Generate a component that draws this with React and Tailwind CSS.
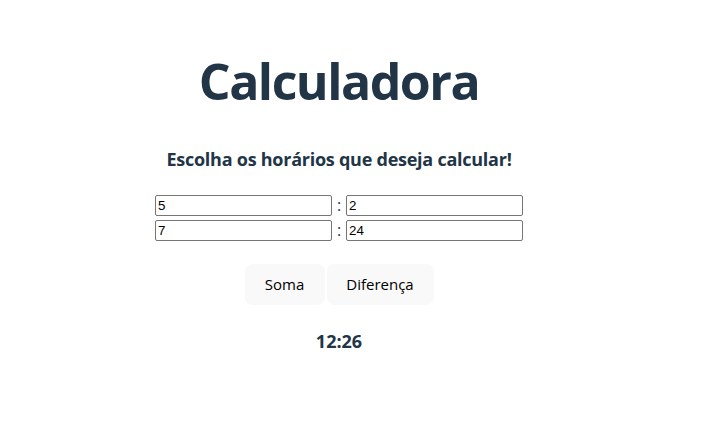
import { useState } from "react";

const font = { fontFamily: '"Open Sans", "Noto Sans", sans-serif' };
const inputFont = { fontFamily: '"Liberation Sans", Arial, sans-serif' };

export default function App() {
  const [h1, setH1] = useState("5");
  const [m1, setM1] = useState("2");
  const [h2, setH2] = useState("7");
  const [m2, setM2] = useState("24");

  return (
    <div className="min-h-screen w-full bg-white" style={font}>
      <div className="w-[678px] flex flex-col items-center text-[#213547]">
        <h1 className="mt-[54px] text-[50px] leading-[1.1] font-bold tracking-[-1.5px]">Calculadora</h1>

        <h3 className="mt-[38px] text-[18px] leading-[24px] font-bold tracking-[-0.25px]">
          Escolha os horários que deseja calcular!
        </h3>

        <div className="mt-[24px] flex flex-col gap-[4px]">
          <div className="flex items-center">
            <input
              className="w-[177px] h-[21px] border border-[#767676] rounded-[2px] px-[2px] text-[13.33px] text-black outline-none"
              style={inputFont}
              value={h1}
              onChange={(e) => setH1(e.target.value)}
            />
            <span className="w-[14px] text-center text-[16px] leading-[21px] text-[#213547]">:</span>
            <input
              className="w-[177px] h-[21px] border border-[#767676] rounded-[2px] px-[2px] text-[13.33px] text-black outline-none"
              style={inputFont}
              value={m1}
              onChange={(e) => setM1(e.target.value)}
            />
          </div>
          <div className="flex items-center">
            <input
              className="w-[177px] h-[21px] border border-[#767676] rounded-[2px] px-[2px] text-[13.33px] text-black outline-none"
              style={inputFont}
              value={h2}
              onChange={(e) => setH2(e.target.value)}
            />
            <span className="w-[14px] text-center text-[16px] leading-[21px] text-[#213547]">:</span>
            <input
              className="w-[177px] h-[21px] border border-[#767676] rounded-[2px] px-[2px] text-[13.33px] text-black outline-none"
              style={inputFont}
              value={m2}
              onChange={(e) => setM2(e.target.value)}
            />
          </div>
        </div>

        <div className="mt-[23px] flex gap-[2px]">
          <button className="w-[80px] h-[41px] rounded-lg bg-[#f9f9f9] text-[15px] font-medium text-black">
            Soma
          </button>
          <button className="w-[107px] h-[41px] rounded-lg bg-[#f9f9f9] text-[15px] font-medium text-black">
            Diferença
          </button>
        </div>

        <h3 className="mt-[24px] text-[18px] leading-[24px] font-bold">12:26</h3>
      </div>
    </div>
  );
}
